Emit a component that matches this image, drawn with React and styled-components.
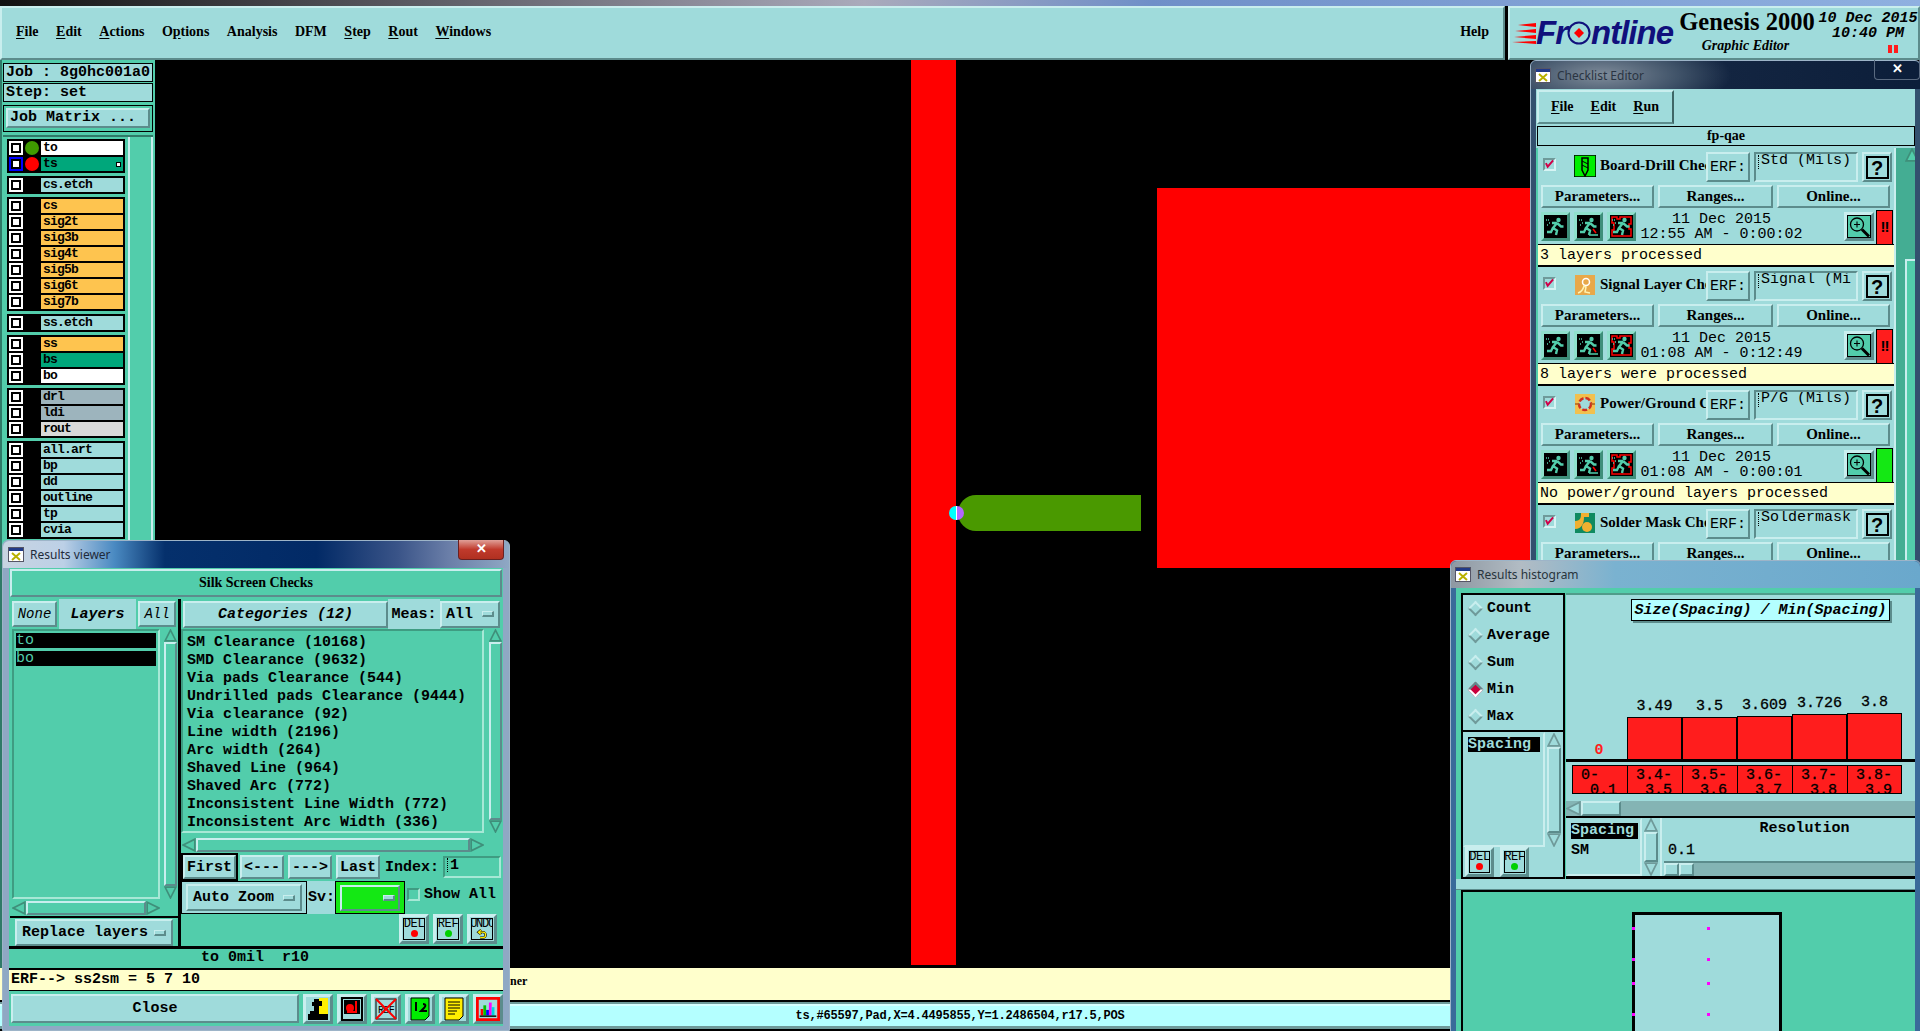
import React from "react";
import styled, { createGlobalStyle, css } from "styled-components";

const PALE = "#9fdbdb";
const TEAL = "#52cdab";
const CREAM = "#ffffcc";
const RED = "#ff1d1d";

const GlobalStyle = createGlobalStyle`
  html, body { margin: 0; padding: 0; background: #000; overflow: hidden; }
  * { box-sizing: border-box; }
`;

const bevel = css`
  border: 2px solid;
  border-color: #c9eeee #5c8c8c #5c8c8c #c9eeee;
`;
const sunken = css`
  border: 2px solid;
  border-color: #5c8c8c #c9eeee #c9eeee #5c8c8c;
`;
const mono = css`
  font-family: "Liberation Mono", monospace;
  font-size: 15px;
  font-weight: 700;
  color: #000;
  white-space: pre;
`;
const serif = css`
  font-family: "Liberation Serif", serif;
  font-weight: 700;
  color: #000;
`;

const Page = styled.div`
  position: relative;
  width: 1920px;
  height: 1031px;
  overflow: hidden;
  display: flex;
  flex-direction: column;
  background: #000;
`;
const TopStrip = styled.div`
  height: 6px;
  background: linear-gradient(90deg, #111 0, #aab 45%, #6f8fc8 60%, #8fb0e0 100%);
`;
const TopBar = styled.div`
  display: flex;
  height: 54px;
`;
const MenuBar = styled.nav`
  ${bevel}
  width: 1505px;
  background: ${PALE};
  display: flex;
  align-items: center;
  gap: 17.5px;
  padding: 0 14px 2px;
  ${serif}
  font-size: 14px;
`;
const MenuItem = styled.span`
  &:last-child { margin-left: auto; margin-right: 0; }
  u { text-underline-offset: 2px; }
`;
const Brand = styled.div`
  ${bevel}
  margin-left: 3px;
  flex: 1;
  background: ${PALE};
  display: flex;
  padding: 0 0 0 2px;
`;
const Logo = styled.div`
  display: flex;
  align-items: center;
  width: 164px;
  height: 48px;
  padding-top: 2px;
`;
const LogoText = styled.span`
  font-family: "Liberation Sans", sans-serif;
  font-style: italic;
  font-weight: 700;
  font-size: 33px;
  letter-spacing: -1px;
  color: #10107c;
`;
const Product = styled.div`
  width: 142px;
  display: flex;
  flex-direction: column;
  align-items: center;
  ${serif}
`;
const ProductName = styled.div`
  font-size: 24.5px;
  line-height: 28px;
  margin-top: 0;
  white-space: nowrap;
`;
const ProductSub = styled.div`
  font-size: 14px;
  font-style: italic;
  margin-top: 2px;
  margin-left: -3px;
`;
const Clock = styled.div`
  ${mono}
  font-style: italic;
  font-size: 15px;
  line-height: 15px;
  padding-top: 3px;
  text-align: center;
  display: flex;
  flex-direction: column;
  align-items: center;
  width: 100px;
`;
const PauseBars = styled.div`
  width: 10px;
  height: 8px;
  margin: 4px 0 0 50px;
  border-left: 4px solid ${RED};
  border-right: 4px solid ${RED};
`;

const Main = styled.div`
  display: flex;
  height: 908px;
`;
const LeftPanel = styled.aside`
  width: 155px;
  background: ${TEAL};
  border-left: 2px solid #2f7a68;
  padding: 3px 2px 0 1px;
  overflow: hidden;
`;
const InfoBox = styled.div`
  ${mono}
  height: 19px;
  line-height: 17px;
  background: ${PALE};
  border: 1px solid #000;
  padding-left: 2px;
  margin-bottom: 1px;
`;
const MatrixWrap = styled.div`
  border: 1px solid #000;
  padding: 2px;
  margin-top: 3px;
  height: 27px;
`;
const MatrixBtn = styled.div`
  ${bevel}
  ${mono}
  height: 20px;
  line-height: 16px;
  background: ${PALE};
  padding-left: 2px;
`;
const LayerArea = styled.div`
  display: flex;
  margin-top: 3px;
  border-top: 2px solid #2f7a68;
`;
const LayerColumn = styled.div`
  width: 125px;
  padding: 2px 0 0 4px;
  flex: none;
`;
const LayerStrip = styled.div`
  flex: 1;
  height: 900px;
  background: ${TEAL};
  border-left: 2px solid #c9eeee;
  border-right: 2px solid #c9eeee;
`;
const LayerGroup = styled.div`
  background: #000;
  padding: 2px;
  margin-bottom: 3px;
  width: 118px;
  display: flex;
  flex-direction: column;
  gap: 2px;
`;
const LayerRow = styled.div`
  display: flex;
  align-items: center;
  height: 14px;
`;
const VisBox = styled.span`
  width: 14px;
  height: 14px;
  flex: none;
  background: #000;
  border: 2px solid ${(p) => (p.$active ? "#0000ff" : "#fff")};
  padding: 2px;
  display: block;
  &::after {
    content: "";
    display: block;
    width: 6px;
    height: 6px;
    background: #fff;
  }
`;
const Dot = styled.span`
  width: 14px;
  height: 14px;
  border-radius: 50%;
  margin: 0 2px;
  flex: none;
  background: ${(p) => p.$color || "transparent"};
`;
const LayerLabel = styled.span`
  ${mono}
  font-size: 13px;
  letter-spacing: -0.8px;
  line-height: 14px;
  flex: 1;
  height: 14px;
  padding-left: 2px;
  background: ${(p) => p.$bg};
  display: flex;
  justify-content: space-between;
  align-items: center;
`;
const Hatch = styled.span`
  width: 5px;
  height: 5px;
  margin-right: 2px;
  border: 1px solid #000;
  background: #fff;
`;
const Canvas = styled.main`
  flex: 1;
  background: #000;
`;
const CanvasArt = styled.svg`
  display: block;
`;
const EchoLine = styled.div`
  height: 32px;
  background: ${CREAM};
  font-family: "Liberation Serif", serif;
  font-size: 12px;
  font-weight: 700;
  padding: 6px 0 0 510px;
  color: #000;
`;
const CoordLine = styled.div`
  border-top: 2px solid #000;
  border-bottom: 2px solid #000;
  flex: 1;
  background: #b4ffff;
  box-shadow: inset 0 2px 0 #6f9a9a, inset 0 4px 0 #d6ffff, inset 0 -3px 0 #6f9a9a;
  padding: 5px 0 0;
  text-align: center;
  font-family: "Liberation Mono", monospace;
  font-size: 12px;
  font-weight: 700;
  letter-spacing: -0.2px;
  color: #000;
  line-height: 18px;
`;

const Win = styled.section`
  position: absolute;
  left: ${(p) => p.$x}px;
  top: ${(p) => p.$y}px;
  width: ${(p) => p.$w}px;
  height: ${(p) => p.$h}px;
  z-index: ${(p) => p.$z};
  background: ${(p) => p.$frame};
  border-radius: 6px 6px 0 0;
  padding: 0 ${(p) => p.$pad}px ${(p) => p.$padb}px;
  display: flex;
  flex-direction: column;
  border: 1px solid #9db4c8;
`;
const WinTitle = styled.header`
  height: ${(p) => p.$h}px;
  flex: none;
  display: flex;
  align-items: center;
  gap: 6px;
  font-family: "Noto Sans", sans-serif;
  font-size: 12px;
  color: ${(p) => p.$color};
  margin: 0 -${(p) => p.$pad}px;
  padding-left: ${(p) => p.$pad - 1}px;
  position: relative;
  background: ${(p) => p.$bg};
  border-radius: 6px 6px 0 0;
`;
const WinClose = styled.span`
  position: absolute;
  right: ${(p) => p.$r}px;
  top: -1px;
  width: 46px;
  height: 20px;
  border: 1px solid ${(p) => (p.$plain ? "#5a6a80" : "#6a2020")};
  border-top: 0;
  border-radius: 0 0 4px 4px;
  background: ${(p) =>
    p.$plain ? "transparent" : "linear-gradient(#e0a098, #c03a2c 50%, #b03020)"};
  color: #fff;
  font-family: "Liberation Sans", sans-serif;
  font-weight: 700;
  font-size: 13px;
  text-align: center;
  line-height: 18px;
`;
const Client = styled.div`
  flex: 1;
  min-height: 0;
  display: flex;
  flex-direction: column;
  overflow: hidden;
  background: ${(p) => p.$bg};
`;

const SilkTitle = styled.div`
  ${bevel}
  ${serif}
  height: 28px;
  margin: 1px 1px 0;
  background: ${TEAL};
  font-size: 14px;
  line-height: 24px;
  text-align: center;
`;
const ViewerMiddle = styled.div`
  display: flex;
  height: 350px;
  margin-top: 2px;
  border-bottom: 3px solid #000;
`;
const ViewerLeft = styled.div`
  width: 172px;
  flex: none;
  display: flex;
  flex-direction: column;
  border-right: 3px solid #000;
  padding-left: 3px;
`;
const ViewerRight = styled.div`
  flex: 1;
  display: flex;
  flex-direction: column;
  min-width: 0;
`;
const HeadRow = styled.div`
  display: flex;
  height: 30px;
  flex: none;
  align-items: center;
`;
const Btn = styled.div`
  ${bevel}
  ${mono}
  width: ${(p) => p.$w}px;
  height: ${(p) => p.$h || 26}px;
  flex: none;
  background: ${(p) => p.$bg || PALE};
  display: flex;
  align-items: center;
  justify-content: ${(p) => p.$justify || "center"};
  margin-left: ${(p) => p.$ml || 0}px;
  ${(p) => p.$italic && "font-style: italic;"}
  ${(p) => p.$thin && "font-weight: 400; font-size: 14px;"}
  ${(p) => p.$ring && "outline: 2px solid #000;"}
  ${(p) => p.$pad && `padding: 0 ${p.$pad}px;`}
`;
const PaleTab = styled.div`
  ${mono}
  font-style: italic;
  width: ${(p) => p.$w}px;
  height: ${(p) => p.$h || 30}px;
  background: ${PALE};
  display: flex;
  align-items: center;
  justify-content: center;
  flex: none;
  margin-left: ${(p) => p.$ml || 0}px;
`;
const PlainTab = styled(PaleTab)`
  font-style: normal;
`;
const MenuMark = styled.span`
  ${bevel}
  width: 12px;
  height: 6px;
  border-width: 1px 2px 2px 1px;
  background: ${PALE};
  margin-left: auto;
  flex: none;
`;
const ListRow = styled.div`
  display: flex;
  flex: ${(p) => p.$grow || "none"};
  min-height: 0;
  height: ${(p) => (p.$h ? `${p.$h}px` : "auto")};
`;
const ListBox = styled.div`
  ${sunken}
  flex: 1;
  min-width: 0;
  background: ${(p) => p.$bg || TEAL};
  padding: ${(p) => p.$pad || "2px 3px"};
  border-color: ${(p) => (p.$bg ? "#9fdbdb #c9eeee #c9eeee #9fdbdb" : "#3f9c82 #a6e8d6 #a6e8d6 #3f9c82")};
  overflow: hidden;
`;
const Picked = styled.div`
  ${mono}
  background: #000;
  color: ${(p) => p.$color};
  height: ${(p) => p.$h || 15}px;
  line-height: ${(p) => p.$h || 15}px;
  margin-bottom: 3px;
  width: ${(p) => p.$w || "auto"};
  font-weight: ${(p) => p.$weight || 400};
`;
const CategoryText = styled.div`
  ${mono}
  line-height: 18px;
  margin-left: 1px;
`;
const Track = styled.div`
  display: flex;
  flex-direction: ${(p) => (p.$horizontal ? "row" : "column")};
  ${(p) => (p.$horizontal ? `height: ${p.$size}px;` : `width: ${p.$size}px;`)}
  flex: ${(p) => (p.$stretch ? 1 : "none")};
  margin: ${(p) => p.$margin || 0};
  background: ${(p) => p.$bg || "transparent"};
`;
const Thumb = styled.div`
  ${bevel}
  flex: 1;
  background: ${(p) => p.$bg || TEAL};
  min-width: 0;
  min-height: 0;
`;
const GrooveGap = styled.div`
  height: 97px;
  flex: none;
`;
const ArrowSvg = styled.svg`
  flex: none;
  display: block;
`;
const ReplaceWrap = styled.div`
  border-top: 2px solid #000;
  margin: 1px 0 0 -2px;
  padding: 1px 0 0 5px;
  flex: none;
`;
const NavRow = styled.div`
  display: flex;
  align-items: center;
  height: 26px;
  margin-top: 2px;
  padding-left: 2px;
  gap: 4px;
`;
const FieldLabel = styled.span`
  ${mono}
  margin-left: 1px;
`;
const TextField = styled.div`
  ${sunken}
  ${mono}
  width: ${(p) => p.$w}px;
  height: ${(p) => p.$h}px;
  line-height: ${(p) => p.$lh || 16}px;
  padding-left: 4px;
  font-weight: ${(p) => p.$weight || 700};
  border-color: ${(p) => (p.$light ? "#5c8c8c #c9eeee #c9eeee #5c8c8c" : "#3f9c82 #a6e8d6 #a6e8d6 #3f9c82")};
  overflow: hidden;
  flex: none;
  &::before {
    content: "";
    display: inline-block;
    width: 1px;
    height: 14px;
    margin: 0 1px 0 -2px;
    vertical-align: -3px;
    border-left: 1px dotted #000;
  }
`;
const ZoomRow = styled.div`
  display: flex;
  align-items: stretch;
  height: 33px;
  margin-top: 1px;
`;
const ZoomWrap = styled.div`
  background: ${(p) => p.$bg};
  border: 1px solid #000;
  padding: 2px 4px;
  display: flex;
  align-items: center;
`;
const SvLabel = styled.div`
  ${mono}
  background: ${PALE};
  width: 28px;
  display: flex;
  align-items: center;
  padding-left: 1px;
`;
const ShowAll = styled.label`
  ${mono}
  display: flex;
  align-items: center;
  gap: 4px;
  margin-left: 2px;
  padding-bottom: 6px;
`;
const EmptyCheck = styled.span`
  ${sunken}
  width: 13px;
  height: 13px;
  border-color: #3f9c82 #a6e8d6 #a6e8d6 #3f9c82;
`;
const ActionRow = styled.div`
  display: flex;
  flex: 1;
  justify-content: flex-end;
  align-items: center;
  gap: 4px;
  padding: 0 6px 2px;
`;
const MiniBtn = styled.div`
  ${bevel}
  border-width: 3px;
  width: ${(p) => p.$w || 30}px;
  height: 30px;
  background: ${PALE};
  display: flex;
  align-items: center;
  justify-content: center;
  flex: none;
`;
const MiniFace = styled.div`
  border: 1px solid #000;
  width: 100%;
  height: 22px;
  margin: 0 1px;
  ${mono}
  font-weight: 400;
  font-size: 12px;
  letter-spacing: ${(p) => (p.$tight ? "-1.3px" : "-0.3px")};
  line-height: 10px;
  text-align: center;
  display: flex;
  flex-direction: column;
  align-items: center;
  overflow: hidden;
`;
const MiniDot = styled.span`
  width: 7px;
  height: 7px;
  border-radius: 50%;
  background: ${(p) => p.$color};
  margin-top: 1px;
`;
const StatusInfo = styled.div`
  ${mono}
  line-height: 18px;
  background: ${TEAL};
  text-align: center;
  padding-right: 2px;
  border-bottom: 2px solid #000;
  height: 21px;
`;
const ErfLine = styled.div`
  ${mono}
  height: 20px;
  line-height: 20px;
  padding-left: 2px;
  background: ${CREAM};
`;
const CloseRow = styled.div`
  flex: 1;
  display: flex;
  align-items: center;
  gap: 4px;
  padding: 0 3px 0 2px;
  background: ${TEAL};
  border-top: 1px solid #000;
`;

/* checklist */
const CheckMenu = styled.div`
  display: flex;
  background: ${PALE};
  height: 36px;
  flex: none;
`;
const CheckMenuGroup = styled.div`
  ${bevel}
  ${serif}
  font-size: 14px;
  width: 137px;
  margin: 1px 0 1px 1px;
  border-right-color: #3f6767;
  display: flex;
  align-items: center;
  gap: 17px;
  padding-left: 12px;
  u { text-underline-offset: 2px; }
`;
const CheckName = styled.div`
  ${serif}
  border: 1px solid #000;
  height: 20px;
  flex: none;
  margin: 1px 0 2px 1px;
  background: ${PALE};
  font-size: 14px;
  line-height: 18px;
  text-align: center;
`;
const CheckBody = styled.div`
  display: flex;
  flex: 1;
  min-height: 0;
  background: ${TEAL};
`;
const CheckList = styled.div`
  width: 356px;
  margin-left: 2px;
  flex: none;
  overflow: hidden;
  background: #000;
  display: flex;
  flex-direction: column;
  gap: 2px;
`;
const Item = styled.article`
  height: 117px;
  flex: none;
  background: ${PALE};
  display: flex;
  flex-direction: column;
  padding: 0 1px;
`;
const ItemHead = styled.div`
  display: flex;
  align-items: center;
  height: 36px;
  padding: 2px 0 0;
`;
const Tick = styled.span`
  ${sunken}
  width: 13px;
  height: 13px;
  flex: none;
  margin: 0 18px 6px 4px;
  border-color: #6f9a9a #d6f4f4 #d6f4f4 #6f9a9a;
  display: flex;
  align-items: center;
  justify-content: center;
`;
const IconSlot = styled.span`
  width: 22px;
  height: 22px;
  flex: none;
  display: flex;
  align-items: center;
  justify-content: center;
  margin-bottom: 2px;
`;
const ItemName = styled.div`
  ${serif}
  font-size: 15px;
  width: 110px;
  padding-left: 4px;
  margin-bottom: 4px;
  overflow: hidden;
  white-space: nowrap;
  flex: none;
`;
const ErfButton = styled(Btn)`
  font-weight: 400;
  margin-right: 4px;
`;
const ItemField = styled(TextField)`
  font-weight: 400;
  padding-left: 3px;
  margin-bottom: 1px;
  display: flex;
  align-items: flex-start;
  &::before {
    margin: 1px 1px 0 -1px;
    flex: none;
  }
`;
const FieldText = styled.span`
  display: block;
  width: 90px;
  overflow: hidden;
`;
const HelpBtn = styled.div`
  ${bevel}
  width: 30px;
  height: 30px;
  margin-left: 4px;
  flex: none;
  display: flex;
  align-items: center;
  justify-content: center;
`;
const HelpFace = styled.span`
  border: 2px solid #000;
  width: 23px;
  height: 23px;
  font-family: "Liberation Sans", sans-serif;
  font-weight: 700;
  font-size: 20px;
  line-height: 20px;
  text-align: center;
  color: #000;
`;
const ItemActions = styled.div`
  display: flex;
  gap: 4px;
  padding-left: 2px;
  height: 25px;
  align-items: center;
`;
const SerifBtn = styled(Btn)`
  ${serif}
  font-size: 15px;
  font-family: "Liberation Serif", serif;
`;
const ItemRun = styled.div`
  display: flex;
  align-items: center;
  height: 35px;
  padding-left: 2px;
  gap: 4px;
`;
const RunFace = styled.span`
  ${bevel}
  border-width: 3px;
  border-color: #8fe0cc #3f8f7a #3f8f7a #8fe0cc;
  width: 29px;
  height: 29px;
  flex: none;
  display: block;
  background: ${TEAL};
`;
const RunDate = styled.div`
  ${mono}
  font-weight: 400;
  line-height: 15px;
  width: 165px;
  text-align: center;
  flex: none;
  margin: 1px 0 0 -1px;
`;
const Lens = styled(RunFace)`
  margin-left: 36px;
  width: 30px;
  border-color: #c9eeee #5c8c8c #5c8c8c #c9eeee;
`;
const ResultBlock = styled.div`
  width: 17px;
  height: 34px;
  margin-left: -2px;
  flex: none;
  background: ${(p) => p.$bg};
  border: 1px solid #000;
  border-bottom: 0;
  color: #000;
  font-family: "Liberation Sans", sans-serif;
  font-weight: 700;
  font-size: 15px;
  line-height: 32px;
  text-align: center;
  letter-spacing: -1px;
`;
const ItemNote = styled.div`
  ${mono}
  font-weight: 400;
  height: 21px;
  line-height: 21px;
  margin: 0 -1px;
  padding-left: 2px;
  background: ${CREAM};
  border-top: 1px solid #000;
`;
const CheckScroll = styled.div`
  flex: 1;
  display: flex;
  padding-left: 9px;
  border-left: 2px solid #c9eeee;
  background: #44ad93;
`;

/* histogram */
const HistTop = styled.div`
  display: flex;
  height: 291px;
  flex: none;
  padding: 5px 0 0 5px;
  background: ${TEAL};
`;
const HistLeft = styled.div`
  width: 104px;
  flex: none;
  display: flex;
  flex-direction: column;
  background: ${PALE};
  border: 2px solid #000;
`;
const RadioList = styled.div`
  height: 137px;
  border-bottom: 2px solid #000;
  display: flex;
  flex-direction: column;
  justify-content: space-around;
  padding: 0 0 0 6px;
  flex: none;
`;
const RadioRow = styled.label`
  ${mono}
  display: flex;
  align-items: center;
  gap: 6px;
  line-height: 16px;
`;
const Diamond = styled.span`
  width: 11px;
  height: 11px;
  margin-left: 1px;
  transform: rotate(45deg);
  background: ${(p) => (p.$on ? "#c8003c" : PALE)};
  border: 2px solid;
  border-color: ${(p) => (p.$on ? "#5c8c8c #fff #fff #5c8c8c" : "#c9eeee #6f9a9a #6f9a9a #c9eeee")};
`;
const MeasureList = styled.div`
  display: flex;
  height: 115px;
  flex: none;
`;
const MiniRow = styled.div`
  display: flex;
  flex: 1;
  align-items: center;
  gap: 6px;
  padding-left: 2px;
`;
const HistRight = styled.div`
  flex: 1;
  min-width: 0;
  display: flex;
  flex-direction: column;
  background: ${PALE};
  margin-left: 1px;
  border-top: 2px solid #4f9c8a;
`;
const ChartArea = styled.div`
  height: 167px;
  flex: none;
  display: flex;
  flex-direction: column;
  border-bottom: 3px solid #000;
`;
const ChartTitle = styled.div`
  ${mono}
  font-style: italic;
  align-self: flex-start;
  margin: 4px 0 0 65px;
  width: 259px;
  height: 22px;
  line-height: 21px;
  background: #b4ffff;
  border: 1px solid #000;
  text-align: center;
  box-shadow: 2px 2px 0 #5c8c8c;
`;
const Bars = styled.div`
  flex: 1;
  display: flex;
  align-items: flex-end;
  padding-left: 6px;
`;
const BarCol = styled.div`
  width: 55px;
  display: flex;
  flex-direction: column;
  align-items: center;
  ${mono}
  font-weight: 400;
  -webkit-text-stroke: 0.3px #000;
  line-height: 17px;
`;
const Bar = styled.div`
  width: 100%;
  background: ${RED};
  border: 1px solid #000;
  border-bottom: 0;
  margin-top: 2px;
`;
const ZeroMark = styled.span`
  color: ${RED};
  font-weight: 700;
  -webkit-text-stroke: 0;
  margin: 0 0 0 -1px;
`;
const Cells = styled.div`
  display: flex;
  height: 39px;
  flex: none;
  padding: 3px 0 0 6px;
`;
const Cell = styled.div`
  ${mono}
  font-weight: 400;
  -webkit-text-stroke: 0.3px #000;
  width: 55px;
  height: 29px;
  background: ${RED};
  border: 1px solid #000;
  border-right-width: 0;
  line-height: 15px;
  padding: 2px 0 0 8px;
  overflow: hidden;
  &:last-child { border-right-width: 1px; }
`;
const LowerRow = styled.div`
  display: flex;
  flex: 1;
  min-height: 0;
  border-top: 2px solid #000;
  border-bottom: 3px solid #000;
`;
const SmallList = styled.div`
  ${sunken}
  width: 76px;
  flex: none;
  padding: 3px 2px 0 3px;
  border-color: #9fdbdb #c9eeee #c9eeee #9fdbdb;
  overflow: hidden;
`;
const SmallItem = styled.div`
  ${mono}
  font-weight: 700;
  line-height: 18px;
`;
const Resolution = styled.div`
  flex: 1;
  min-width: 0;
  display: flex;
  flex-direction: column;
  padding: 2px 0 0 2px;
  border-left: 2px solid #c9eeee;
`;
const ResTitle = styled.div`
  ${mono}
  text-align: center;
  line-height: 18px;
  padding-left: 30px;
`;
const ResValue = styled.div`
  ${mono}
  font-weight: 400;
  -webkit-text-stroke: 0.3px #000;
  line-height: 18px;
  padding-left: 4px;
  margin-top: 4px;
`;
const Slider = styled.div`
  height: 15px;
  margin-top: 1px;
  background: #84b4b4;
  border-top: 2px solid #5c8c8c;
  display: flex;
`;
const SliderKnob = styled.div`
  ${bevel}
  width: 15px;
  flex: none;
  background: ${PALE};
`;
const PreviewGap = styled.div`
  height: 11px;
  flex: none;
  background: ${PALE};
  border-bottom: 1px solid #5c8c8c;
`;
const Preview = styled.div`
  flex: 1;
  background: ${TEAL};
  margin-left: 5px;
  border-top: 2px solid #000;
  border-left: 2px solid #000;
  padding: 20px 0 0 169px;
  overflow: hidden;
`;
const Board = styled.div`
  position: relative;
  width: 150px;
  height: 200px;
  background: ${PALE};
  border: 3px solid #000;
`;
const Pin = styled.span`
  position: absolute;
  left: ${(p) => p.$x}px;
  top: ${(p) => p.$y}px;
  width: 3px;
  height: 3px;
  background: #ff00ff;
`;

const Arrow = ({ dir, size = 12, dark }) => {
  const pts = {
    up: "6,1 11,11 1,11",
    down: "1,1 11,1 6,11",
    left: "1,6 11,1 11,11",
    right: "1,1 11,6 1,11",
  }[dir];
  return (
    <ArrowSvg width={size} height={size} viewBox="0 0 12 12">
      <polygon
        points={pts}
        fill={dark ? "#9fdbdb" : "#52cdab"}
        stroke={dark ? "#6f9a9a" : "#3f8f7a"}
        strokeWidth="1.5"
      />
    </ArrowSvg>
  );
};

const VScroll = ({ margin, size = 13, bg }) => (
  <Track $size={size} $margin={margin}>
    <Arrow dir="up" size={size} dark={!!bg} />
    <Thumb $bg={bg} />
    <Arrow dir="down" size={size} dark={!!bg} />
  </Track>
);

const HScroll = ({ margin }) => (
  <Track $horizontal $size={14} $margin={margin}>
    <Arrow dir="left" size={14} />
    <Thumb />
    <Arrow dir="right" size={14} />
  </Track>
);

const WinIcon = () => (
  <svg width="16" height="15" viewBox="0 0 16 15">
    <rect x="0.5" y="0.5" width="15" height="14" fill="#fff" stroke="#556" />
    <rect x="1" y="1" width="14" height="3" fill="#223a88" />
    <path d="M4 6l8 7M12 6l-8 7" stroke="#b8b000" strokeWidth="2" />
  </svg>
);

const Runner = ({ kind }) => (
  <svg width="23" height="23" viewBox="0 0 23 23" style={{ display: "block", background: "#000" }}>
    {kind === "outline" && (
      <path d="M2 2h5v2h3V2h11v7h-2v5h2v7H2v-6h2V8H2z" fill="none" stroke="#ff0000" strokeWidth="1.5" />
    )}
    <circle cx="14.5" cy="5" r="2.2" fill="#52cdab" />
    <path
      d="M13 8L9 13l4 2.5-1 4.5M9 13l-2 4H3M13 8l4 3.5h2.5M13 8H8"
      fill="none"
      stroke="#52cdab"
      strokeWidth="2.4"
    />
    <path d="M2 5h3M5 8h2M3 10h2" stroke="#52cdab" strokeWidth="1.3" strokeDasharray="1 1" />
    {kind === "slash" && <path d="M16 14l3 4" stroke="#ff0000" strokeWidth="1.5" />}
    {kind === "slash" && <path d="M12 20h9" stroke="#52cdab" strokeWidth="1.5" />}
  </svg>
);

const Magnifier = () => (
  <svg width="24" height="23" viewBox="0 0 24 23" style={{ display: "block" }}>
    <rect x="0.5" y="0.5" width="23" height="22" fill="none" stroke="#000" />
    <circle cx="10" cy="9.5" r="6.5" fill="none" stroke="#000" strokeWidth="1.3" />
    <path d="M10 6.5v6M7 9.5h6" stroke="#000" strokeWidth="1.1" />
    <path d="M15 14.5l7 7" stroke="#000" strokeWidth="3" />
  </svg>
);

const TickMark = () => (
  <svg width="10" height="10" viewBox="0 0 10 10">
    <path d="M1 4l2 4L9 1" fill="none" stroke="#d00048" strokeWidth="2.2" />
  </svg>
);

const UndoArrow = () => (
  <svg width="12" height="11" viewBox="0 0 12 11" style={{ display: "block" }}>
    <path d="M5 1L2 3.5 5 6M2 3.5h5a3 3 0 0 1 0 6H4" fill="none" stroke="#000" strokeWidth="2.6" />
    <path d="M5 1L2 3.5 5 6M2 3.5h5a3 3 0 0 1 0 6H4" fill="none" stroke="#ffee00" strokeWidth="1.3" />
  </svg>
);

const CheckIcon = ({ kind }) => {
  if (kind === "drill")
    return (
      <svg width="22" height="22" viewBox="0 0 22 22">
        <rect width="22" height="22" fill="#00ee00" stroke="#000" strokeWidth="1.5" />
        <path d="M8 3h6v12l-3 6-3-6z" fill="none" stroke="#000" strokeWidth="1.5" />
        <path d="M8 6l6 3M8 10l6 3" stroke="#000" />
      </svg>
    );
  if (kind === "signal")
    return (
      <svg width="20" height="20" viewBox="0 0 20 20">
        <rect width="20" height="20" fill="#e8a84a" />
        <circle cx="11" cy="7" r="3.5" fill="none" stroke="#fff" strokeWidth="1.5" />
        <path d="M3 18c3-1 5-3 6-7l2 1-1 5 5 1" fill="none" stroke="#fff3b0" strokeWidth="1.5" />
      </svg>
    );
  if (kind === "power")
    return (
      <svg width="20" height="20" viewBox="0 0 20 20">
        <rect width="20" height="20" fill="#f2c04e" />
        <circle cx="10" cy="10" r="6" fill="#9fdbdb" stroke="#d03020" strokeWidth="2.5" strokeDasharray="5 2" />
        <path d="M0 10h4M16 10h4" stroke="#b06020" strokeWidth="1.5" />
      </svg>
    );
  return (
    <svg width="20" height="20" viewBox="0 0 20 20">
      <rect width="20" height="20" fill="#0f8a60" />
      <path d="M0 16V8c6 0 6-4 6-8h8v4H9c0 6-2 12-9 12z" fill="#f0b030" />
      <circle cx="12" cy="14" r="5" fill="#f0b030" />
    </svg>
  );
};

const ToolIcon = ({ kind }) => {
  const frame = { display: "block" };
  if (kind === "split")
    return (
      <svg width="22" height="24" viewBox="0 0 22 24" style={frame}>
        <rect x="1" y="1" width="20" height="22" fill="#000" />
        <rect x="12" y="1" width="9" height="16" fill="#ffee00" />
        <rect x="1" y="1" width="11" height="16" fill="#9fdbdb" />
        <path d="M7 2h5v15H3v-3h4V9H5V5h2z" fill="#000" />
        <rect x="12" y="4" width="3" height="5" fill="#000" />
      </svg>
    );
  if (kind === "record")
    return (
      <svg width="22" height="24" viewBox="0 0 22 24" style={frame}>
        <rect x="1" y="1" width="20" height="22" fill="#9fdbdb" stroke="#000" strokeWidth="2" />
        <rect x="3" y="3" width="16" height="14" fill="#000" />
        <circle cx="9" cy="11" r="4" fill="#ff0000" />
        <path d="M15 4v12M6 15h10" stroke="#ff0000" strokeWidth="2" />
      </svg>
    );
  if (kind === "noref")
    return (
      <svg width="24" height="24" viewBox="0 0 24 24" style={frame}>
        <rect x="2" y="2" width="20" height="20" fill="none" stroke="#000" />
        <text x="12" y="16" textAnchor="middle" fontFamily="Liberation Mono" fontSize="10" letterSpacing="-0.6">REF</text>
        <path d="M2 2l20 20M22 2L2 22" stroke="#ff0000" strokeWidth="2" />
      </svg>
    );
  if (kind === "half")
    return (
      <svg width="22" height="24" viewBox="0 0 22 24" style={frame}>
        <path d="M2 1h18v18l-4 4H2z" fill="#00ee00" stroke="#000" />
        <path d="M7 5v9M14 7c3 0 3 2 1 4l-3 3h6" fill="none" stroke="#000" strokeWidth="2" />
      </svg>
    );
  if (kind === "note")
    return (
      <svg width="22" height="24" viewBox="0 0 22 24" style={frame}>
        <path d="M2 1h18v18l-4 4H2z" fill="#ffee00" stroke="#000" />
        <path d="M5 5h12M5 8h12M5 11h12M5 14h9M5 17h7" stroke="#000" />
      </svg>
    );
  return (
    <svg width="26" height="26" viewBox="0 0 26 26" style={frame}>
      <rect x="1.5" y="1.5" width="23" height="23" fill="#9fdbdb" stroke="#ff0000" strokeWidth="3" />
      <rect x="5" y="13" width="3" height="7" fill="#ff0000" />
      <rect x="8" y="9" width="3" height="11" fill="#00c000" />
      <rect x="11" y="14" width="3" height="6" fill="#0000ff" />
      <rect x="14" y="6" width="3" height="14" fill="#ff00ff" />
      <rect x="17" y="11" width="3" height="9" fill="#00d0e0" />
      <rect x="4" y="20" width="18" height="1.5" fill="#000" />
    </svg>
  );
};

const MENU = [
  ["", "F", "ile"], ["", "E", "dit"], ["", "A", "ctions"], ["O", "p", "tions"], ["Analysis", "", ""],
  ["DFM", "", ""], ["", "S", "tep"], ["", "R", "out"], ["", "W", "indows"],
];

const LAYERS = [
  [
    { name: "to", bg: "#fff", dot: "#3f9a00" },
    { name: "ts", bg: "#00a77b", dot: "#ff0000", active: true, hatch: true },
  ],
  [{ name: "cs.etch", bg: PALE }],
  ["cs", "sig2t", "sig3b", "sig4t", "sig5b", "sig6t", "sig7b"].map((name) => ({ name, bg: "#fec44f" })),
  [{ name: "ss.etch", bg: PALE }],
  [
    { name: "ss", bg: "#fec44f" },
    { name: "bs", bg: "#00a77b" },
    { name: "bo", bg: "#fff" },
  ],
  [
    { name: "drl", bg: "#9db4bd" },
    { name: "ldi", bg: "#9db4bd" },
    { name: "rout", bg: "#d9d9d9" },
  ],
  ["all.art", "bp", "dd", "outline", "tp", "cvia"].map((name) => ({ name, bg: PALE })),
];

const CATEGORIES = [
  "SM Clearance (10168)",
  "SMD Clearance (9632)",
  "Via pads Clearance (544)",
  "Undrilled pads Clearance (9444)",
  "Via clearance (92)",
  "Line width (2196)",
  "Arc width (264)",
  "Shaved Line (964)",
  "Shaved Arc (772)",
  "Inconsistent Line Width (772)",
  "Inconsistent Arc Width (336)",
];

const CHECKS = [
  { icon: "drill", name: "Board-Drill Checks", erf: "Std (Mils)", date: "12:55 AM - 0:00:02", note: "3 layers processed", bad: true, day: "11 Dec 2015" },
  { icon: "signal", name: "Signal Layer Checks", erf: "Signal (Mils)", date: "01:08 AM - 0:12:49", note: "8 layers were processed", bad: true, day: "11 Dec 2015" },
  { icon: "power", name: "Power/Ground Checks", erf: "P/G (Mils)", date: "01:08 AM - 0:00:01", note: "No power/ground layers processed", bad: false, day: "11 Dec 2015" },
  { icon: "solder", name: "Solder Mask Checks", erf: "Soldermask", date: "", note: "", bad: false, day: "" },
];

const HIST = [
  { label: "3.49", h: 42 },
  { label: "3.5", h: 42 },
  { label: "3.609", h: 43 },
  { label: "3.726", h: 45 },
  { label: "3.8", h: 46 },
];
const RANGES = ["0-\n 0.1", "3.4-\n 3.5", "3.5-\n 3.6", "3.6-\n 3.7", "3.7-\n 3.8", "3.8-\n 3.9"];

const CheckItem = ({ c }) => (
  <Item>
    <ItemHead>
      <Tick><TickMark /></Tick>
      <IconSlot><CheckIcon kind={c.icon} /></IconSlot>
      <ItemName>{c.name}</ItemName>
      <ErfButton $w={44} $h={30}>ERF:</ErfButton>
      <ItemField $light $w={104} $h={30} $lh={14}><FieldText>{c.erf}</FieldText></ItemField>
      <HelpBtn><HelpFace>?</HelpFace></HelpBtn>
    </ItemHead>
    <ItemActions>
      <SerifBtn $w={113} $h={23}>Parameters...</SerifBtn>
      <SerifBtn $w={115} $h={23}>Ranges...</SerifBtn>
      <SerifBtn $w={113} $h={23}>Online...</SerifBtn>
    </ItemActions>
    <ItemRun>
      <RunFace><Runner /></RunFace>
      <RunFace><Runner kind="slash" /></RunFace>
      <RunFace><Runner kind="outline" /></RunFace>
      <RunDate>{c.day}{"\n"}{c.date}</RunDate>
      <Lens><Magnifier /></Lens>
      <ResultBlock $bg={c.bad ? RED : "#14e814"}>{c.bad ? "!!" : ""}</ResultBlock>
    </ItemRun>
    <ItemNote>{c.note}</ItemNote>
  </Item>
);

export default function App() {
  return (
    <Page>
      <GlobalStyle />
      <TopStrip />
      <TopBar>
        <MenuBar>
          {MENU.map(([a, u, b]) => (
            <MenuItem key={a + u + b}>{a}{u && <u>{u}</u>}{b}</MenuItem>
          ))}
          <MenuItem>Help</MenuItem>
        </MenuBar>
        <Brand>
          <Logo>
            <svg width="24" height="24" viewBox="0 0 24 24">
              <path d="M24 2L6 4l18 2zM24 8L3 10l21 2zM24 14L2 16l22 2zM24 20L0 21l24 2z" fill="#ff0000" />
            </svg>
            <LogoText>Fr</LogoText>
            <svg width="24" height="24" viewBox="0 0 24 24">
              <circle cx="12" cy="12" r="10.5" fill="none" stroke="#10107c" strokeWidth="2" />
              <path d="M12 7l5 5-5 5-5-5z" fill="#ff0000" />
            </svg>
            <LogoText>ntline</LogoText>
          </Logo>
          <Product>
            <ProductName>Genesis 2000</ProductName>
            <ProductSub>Graphic Editor</ProductSub>
          </Product>
          <Clock>
            <span>10 Dec 2015</span>
            <span>10:40 PM</span>
            <PauseBars />
          </Clock>
        </Brand>
      </TopBar>
      <Main>
        <LeftPanel>
          <InfoBox>Job : 8g0hc001a0</InfoBox>
          <InfoBox>Step: set</InfoBox>
          <MatrixWrap><MatrixBtn>Job Matrix ...</MatrixBtn></MatrixWrap>
          <LayerArea>
            <LayerColumn>
              {LAYERS.map((group, i) => (
                <LayerGroup key={i}>
                  {group.map((l) => (
                    <LayerRow key={l.name}>
                      <VisBox $active={l.active} />
                      <Dot $color={l.dot} />
                      <LayerLabel $bg={l.bg}>
                        {l.name}
                        {l.hatch && <Hatch />}
                      </LayerLabel>
                    </LayerRow>
                  ))}
                </LayerGroup>
              ))}
            </LayerColumn>
            <LayerStrip />
          </LayerArea>
        </LeftPanel>
        <Canvas>
          <CanvasArt width="1765" height="908" viewBox="155 60 1765 908">
            <rect x="911" y="60" width="45" height="905" fill="#ff0000" />
            <rect x="1157" y="188" width="400" height="380" fill="#ff0000" />
            <path d="M1141 495H976a18 18 0 0 0 0 36h165z" fill="#4a9900" />
            <path d="M956 506a7 7 0 0 0 0 14z" fill="#00ffff" />
            <path d="M957 506a7 7 0 0 1 0 14z" fill="#b266ff" />
            <path d="M956.5 506v14" stroke="#fff" strokeWidth="1" />
          </CanvasArt>
        </Canvas>
      </Main>
      <EchoLine>ner</EchoLine>
      <CoordLine>ts,#65597,Pad,X=4.4495855,Y=1.2486504,r17.5,POS</CoordLine>

      <Win $x={1530} $y={60} $w={391} $h={505} $z={1} $frame="#33506e" $pad={5} $padb={0}>
        <WinTitle $h={28} $pad={5} $color="#2a3442" $bg="radial-gradient(ellipse 130px 40px at 70px 14px, #7f8c9a 0, #3f5268 60%, transparent 100%), linear-gradient(90deg, #1a2c48, #0c1e3a)">
          <WinIcon />
          Checklist Editor
          <WinClose $plain $r={0}>✕</WinClose>
        </WinTitle>
        <Client $bg={PALE}>
          <CheckMenu>
            <CheckMenuGroup>
              <span><u>F</u>ile</span>
              <span><u>E</u>dit</span>
              <span><u>R</u>un</span>
            </CheckMenuGroup>
          </CheckMenu>
          <CheckName>fp-qae</CheckName>
          <CheckBody>
            <CheckList>
              {CHECKS.map((c) => <CheckItem key={c.name} c={c} />)}
            </CheckList>
            <CheckScroll>
              <Track $size={14}>
                <Arrow dir="up" size={14} />
                <GrooveGap />
                <Thumb />
              </Track>
            </CheckScroll>
          </CheckBody>
        </Client>
      </Win>

      <Win $x={1450} $y={560} $w={471} $h={472} $z={2} $frame="#3a6a9a" $pad={5} $padb={0}>
        <WinTitle $h={27} $pad={5} $color="#28343c" $bg="linear-gradient(90deg, #8e98a2, #b2bcc4 15%, #7ab2d0 35%, #6aa8cc 100%)">
          <WinIcon />
          Results histogram
        </WinTitle>
        <Client $bg={TEAL}>
          <HistTop>
            <HistLeft>
              <RadioList>
                <RadioRow><Diamond />Count</RadioRow>
                <RadioRow><Diamond />Average</RadioRow>
                <RadioRow><Diamond />Sum</RadioRow>
                <RadioRow><Diamond $on />Min</RadioRow>
                <RadioRow><Diamond />Max</RadioRow>
              </RadioList>
              <MeasureList>
                <ListBox $bg={PALE} $pad="3px 3px">
                  <Picked $color={PALE} $w="72px" $weight={700}>Spacing</Picked>
                </ListBox>
                <VScroll size={14} margin="1px 2px 0 2px" bg={PALE} />
              </MeasureList>
              <MiniRow>
                <MiniBtn $w={29}><MiniFace>DEL<MiniDot $color="#ff0000" /></MiniFace></MiniBtn>
                <MiniBtn $w={29}><MiniFace>REF<MiniDot $color="#00d000" /></MiniFace></MiniBtn>
              </MiniRow>
            </HistLeft>
            <HistRight>
              <ChartArea>
                <ChartTitle>Size(Spacing) / Min(Spacing)</ChartTitle>
                <Bars>
                  <BarCol><ZeroMark>0</ZeroMark></BarCol>
                  {HIST.map((b) => (
                    <BarCol key={b.label}>
                      {b.label}
                      <Bar style={{ height: b.h }} />
                    </BarCol>
                  ))}
                </Bars>
              </ChartArea>
              <Cells>
                {RANGES.map((r) => <Cell key={r}>{r}</Cell>)}
              </Cells>
              <Track $horizontal $size={15} $bg="#84b4b4">
                <Arrow dir="left" size={15} dark />
                <SliderKnob style={{ width: 40 }} />
              </Track>
              <LowerRow>
                <SmallList>
                  <Picked $color={PALE} $h={16} $weight={700}>Spacing</Picked>
                  <SmallItem>SM</SmallItem>
                </SmallList>
                <VScroll size={14} margin="0 2px" bg={PALE} />
                <Resolution>
                  <ResTitle>Resolution</ResTitle>
                  <ResValue>0.1</ResValue>
                  <Slider><SliderKnob /><SliderKnob /></Slider>
                </Resolution>
              </LowerRow>
            </HistRight>
          </HistTop>
          <PreviewGap />
          <Preview>
            <Board>
              <Pin $x={-3} $y={12} />
              <Pin $x={72} $y={12} />
              <Pin $x={-3} $y={43} />
              <Pin $x={72} $y={43} />
              <Pin $x={-3} $y={67} />
              <Pin $x={72} $y={67} />
              <Pin $x={-3} $y={98} />
              <Pin $x={72} $y={98} />
            </Board>
          </Preview>
        </Client>
      </Win>

      <Win $x={2} $y={540} $w={508} $h={491} $z={3} $frame="#8fa8c4" $pad={6} $padb={4}>
        <WinTitle $h={27} $pad={6} $color="#1e2a3a" $bg="linear-gradient(90deg, #c8d4e2 0, #bcd0e6 12%, #4a8ac2 22%, #05306c 32%, #022a66 62%, #3a5488 78%, #6a7ea8 88%, #8fa8c4 100%)">
          <WinIcon />
          Results viewer
          <WinClose $r={5}>✕</WinClose>
        </WinTitle>
        <Client $bg={TEAL}>
          <SilkTitle>Silk Screen Checks</SilkTitle>
          <ViewerMiddle>
            <ViewerLeft>
              <HeadRow>
                <Btn $w={45} $italic $thin>None</Btn>
                <PaleTab $w={77} $ml={2}>Layers</PaleTab>
                <Btn $w={38} $italic $thin $ml={2}>All</Btn>
              </HeadRow>
              <ListRow $grow={1}>
                <ListBox $pad="2px 2px">
                  <Picked $color={TEAL}>to</Picked>
                  <Picked $color={TEAL}>bo</Picked>
                </ListBox>
                <VScroll margin="0 1px 0 4px" />
              </ListRow>
              <HScroll margin="2px 18px 0 0" />
              <ReplaceWrap>
                <Btn $w={158} $h={27} $justify="flex-start" $pad={5}>
                  Replace layers
                  <MenuMark />
                </Btn>
              </ReplaceWrap>
            </ViewerLeft>
            <ViewerRight>
              <HeadRow>
                <Btn $w={205} $h={27} $italic $ml={2}>Categories (12)</Btn>
                <PlainTab $w={52}>Meas:</PlainTab>
                <Btn $w={60} $h={27} $justify="flex-start" $pad={4}>All<MenuMark /></Btn>
              </HeadRow>
              <ListRow $h={204}>
                <ListBox $pad="3px 3px">
                  {CATEGORIES.map((c) => <CategoryText key={c}>{c}</CategoryText>)}
                </ListBox>
                <VScroll margin="0 1px 0 5px" />
              </ListRow>
              <HScroll margin="5px 19px 0 1px" />
              <NavRow>
                <Btn $w={53} $h={24} $ring>First</Btn>
                <Btn $w={44} $h={24}>&lt;---</Btn>
                <Btn $w={44} $h={24}>---&gt;</Btn>
                <Btn $w={44} $h={24}>Last</Btn>
                <FieldLabel>Index:</FieldLabel>
                <TextField $w={58} $h={22}>1</TextField>
              </NavRow>
              <ZoomRow>
                <ZoomWrap $bg={PALE}>
                  <Btn $w={116} $h={27} $justify="flex-start" $pad={5}>Auto Zoom<MenuMark /></Btn>
                </ZoomWrap>
                <SvLabel>Sv:</SvLabel>
                <ZoomWrap $bg="#14e814">
                  <Btn $w={60} $h={26} $bg="#14e814" $justify="flex-end" $pad={3}><MenuMark /></Btn>
                </ZoomWrap>
                <ShowAll><EmptyCheck />Show All</ShowAll>
              </ZoomRow>
              <ActionRow>
                <MiniBtn><MiniFace>DEL<MiniDot $color="#ff0000" /></MiniFace></MiniBtn>
                <MiniBtn><MiniFace>REF<MiniDot $color="#00d000" /></MiniFace></MiniBtn>
                <MiniBtn><MiniFace $tight>UNDO<UndoArrow /></MiniFace></MiniBtn>
              </ActionRow>
            </ViewerRight>
          </ViewerMiddle>
          <StatusInfo>to 0mil  r10</StatusInfo>
          <ErfLine>ERF--&gt; ss2sm = 5 7 10</ErfLine>
          <CloseRow>
            <Btn $w={288} $h={29}>Close</Btn>
            {["split", "record", "noref", "half", "note", "chart"].map((k) => (
              <MiniBtn key={k}><ToolIcon kind={k} /></MiniBtn>
            ))}
          </CloseRow>
        </Client>
      </Win>
    </Page>
  );
}
